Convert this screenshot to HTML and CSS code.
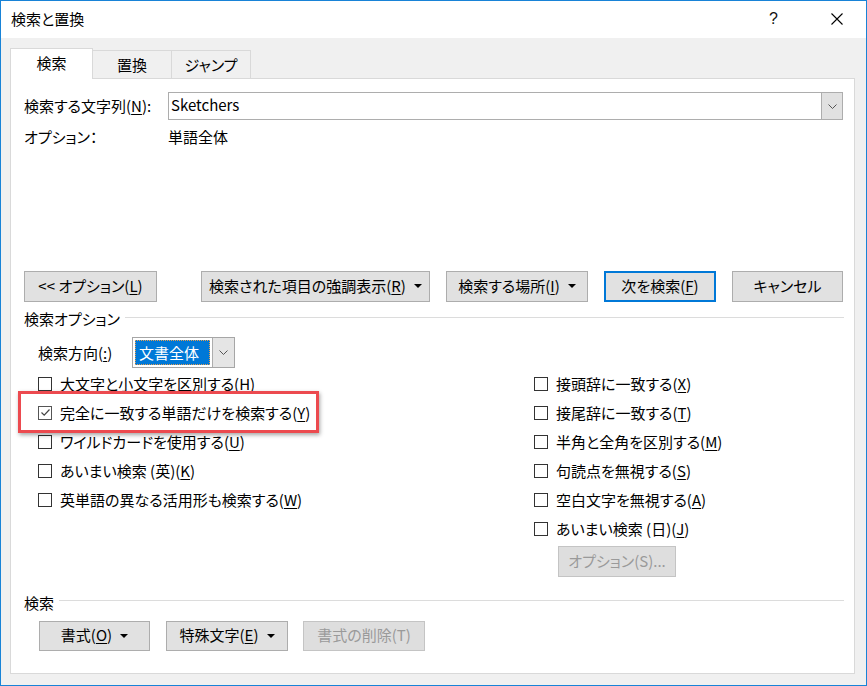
FILE: index.html
```html
<!DOCTYPE html>
<html lang="ja">
<head>
<meta charset="utf-8">
<title>検索と置換</title>
<link rel="stylesheet" href="styles.css">
</head>
<body>
<div class="window">
  <div class="titlebar">
    <span class="title">検索と置換</span>
    <span class="help">?</span>
    <span class="close"><svg width="12" height="12" viewBox="0 0 12 12"><path d="M0.5 0.5L11.5 11.5M11.5 0.5L0.5 11.5" stroke="#000" stroke-width="1.1" fill="none"/></svg></span>
  </div>
  <div class="client">
    <div class="tabs">
      <div class="tab tab-active">検索</div>
      <div class="tab">置換</div>
      <div class="tab">ジャンプ</div>
    </div>
    <div class="panel">
      <div class="find-row">
        <label class="find-label">検索する文字列(<u>N</u>):</label>
        <div class="combo">
          <span class="combo-text">Sketchers</span>
          <span class="combo-btn"><svg width="9" height="5" viewBox="0 0 9 5"><path d="M0.5 0.5L4.5 4.5L8.5 0.5" stroke="#555" fill="none"/></svg></span>
        </div>
      </div>
      <div class="opt-row">
        <span class="opt-label">オプション：</span>
        <span>単語全体</span>
      </div>

      <div class="btn-row">
        <button class="btn btn-less">&lt;&lt; オプション(<u>L</u>)</button>
        <div class="btn-group">
          <button class="btn btn-highlight">検索された項目の強調表示(<u>R</u>)<i class="tri"></i></button>
          <button class="btn btn-where">検索する場所(<u>I</u>)<i class="tri"></i></button>
          <button class="btn btn-next">次を検索(<u>F</u>)</button>
          <button class="btn btn-cancel">キャンセル</button>
        </div>
      </div>

      <div class="section">
        <span class="section-label">検索オプション</span>
        <span class="section-line"></span>
      </div>

      <div class="dir-row">
        <span class="dir-label">検索方向(<u>:</u>)</span>
        <div class="select">
          <span class="select-val"><span class="select-hl">文書全体</span></span>
          <span class="select-btn"><svg width="9" height="5" viewBox="0 0 9 5"><path d="M0.5 0.5L4.5 4.5L8.5 0.5" stroke="#555" fill="none"/></svg></span>
        </div>
      </div>

      <div class="opts">
        <div class="col col-left">
          <div class="chk"><span class="box"></span>大文字と小文字を区別する(<u>H</u>)</div>
          <div class="chk"><span class="box box-on"><svg width="11" height="11" viewBox="0 0 11 11"><path d="M1.5 5.5L4.2 8.2L9.5 2.5" stroke="#444" stroke-width="1.2" fill="none"/></svg></span>完全に一致する単語だけを検索する(<u>Y</u>)</div>
          <div class="chk"><span class="box"></span>ワイルドカードを使用する(<u>U</u>)</div>
          <div class="chk"><span class="box"></span>あいまい検索 (英)(<u>K</u>)</div>
          <div class="chk"><span class="box"></span>英単語の異なる活用形も検索する(<u>W</u>)</div>
        </div>
        <div class="col col-right">
          <div class="chk"><span class="box"></span>接頭辞に一致する(<u>X</u>)</div>
          <div class="chk"><span class="box"></span>接尾辞に一致する(<u>T</u>)</div>
          <div class="chk"><span class="box"></span>半角と全角を区別する(<u>M</u>)</div>
          <div class="chk"><span class="box"></span>句読点を無視する(<u>S</u>)</div>
          <div class="chk"><span class="box"></span>空白文字を無視する(<u>A</u>)</div>
          <div class="chk"><span class="box"></span>あいまい検索 (日)(<u>J</u>)</div>
          <button class="btn btn-disabled btn-fuzzy">オプション(S)...</button>
        </div>
      </div>

      <div class="section section-find">
        <span class="section-label">検索</span>
        <span class="section-line"></span>
      </div>

      <div class="bottom-row">
        <button class="btn btn-format">書式(<u>O</u>)<i class="tri"></i></button>
        <button class="btn btn-special">特殊文字(<u>E</u>)<i class="tri"></i></button>
        <button class="btn btn-disabled btn-clear">書式の削除(T)</button>
      </div>
    </div>
  </div>
  <div class="callout"></div>
</div>
</body>
</html>
```

FILE: styles.css
```css
* { box-sizing: border-box; }
html, body { margin: 0; padding: 0; background: #f0f0f0; }
body {
  font-family: "Noto Sans CJK JP", "Noto Sans", sans-serif;
  font-size: 15px;
  line-height: 18px;
  color: #000;
  font-feature-settings: "palt";
}
u { text-decoration: underline; text-underline-offset: 2px; text-decoration-thickness: 1px; }

.window {
  position: relative;
  width: 867px;
  height: 686px;
  border: 1px solid #1883d7;
  background: #f0f0f0;
  overflow: hidden;
}

.titlebar {
  height: 37px;
  background: #fff;
  display: flex;
  align-items: center;
  padding-left: 10px;
}
.title { font-size: 15px; flex: 1; padding-bottom: 2px; }
.help { width: 14px; font-size: 16px; margin-right: 48px; padding-bottom: 2px; font-family: "Liberation Sans", sans-serif; color: #111; }
.close { width: 12px; height: 12px; margin-right: 23px; display: flex; margin-top: -2px; }

.client {
  padding: 10px 0 0 9px;
}

.tabs {
  display: flex;
  align-items: flex-end;
  height: 30px;
}
.tab {
  width: 79px;
  height: 28px;
  border-top: 1px solid #d9d9d9;
  border-right: 1px solid #d9d9d9;
  background: #f0f0f0;
  display: flex;
  align-items: center;
  justify-content: center;
  padding-top: 1px;
}
.tab-active {
  width: 83px;
  height: 31px;
  margin-bottom: -1px;
  border-left: 1px solid #d9d9d9;
  background: #fff;
  position: relative;
  z-index: 1;
  padding-top: 0;
  padding-bottom: 2px;
}
.tab-active + .tab { border-left: none; }

.panel {
  width: 845px;
  height: 596px;
  background: #fff;
  border: 1px solid #d9d9d9;
  padding: 13px 11px 0 13px;
}

.find-row {
  display: flex;
  align-items: center;
  height: 28px;
}
.find-label { width: 144px; }
.combo {
  flex: 1;
  height: 28px;
  border: 1px solid #adadad;
  display: flex;
  align-items: stretch;
}
.combo-text { flex: 1; padding: 3px 0 0 2px; }
.combo-btn {
  width: 21px;
  background: #e1e1e1;
  border-left: 1px solid #adadad;
  display: flex;
  align-items: center;
  justify-content: center;
}

.opt-row {
  margin-top: 8px;
  display: flex;
  height: 18px;
}
.opt-label { width: 144px; }

.btn {
  font: inherit;
  font-feature-settings: "palt";
  color: #000;
  background: #e1e1e1;
  border: 1px solid #adadad;
  height: 31px;
  padding: 0 0 2px;
  display: flex;
  align-items: center;
  justify-content: center;
  margin: 0;
}
.tri {
  display: inline-block;
  width: 0; height: 0;
  border-left: 4px solid transparent;
  border-right: 4px solid transparent;
  border-top: 4px solid #000;
  margin-left: 8px;
  margin-top: 1px;
}
.btn-row {
  margin-top: 125px;
  display: flex;
  justify-content: space-between;
}
.btn-less { width: 133px; }
.btn-group { display: flex; gap: 16px; }
.btn-highlight { width: 229px; }
.btn-where { width: 142px; }
.btn-next { width: 112px; border: 2px solid #0078d7; }
.btn-cancel { width: 111px; }

.section {
  margin-top: 8px;
  display: flex;
  height: 18px;
  margin-right: -1px;
}
.section-line {
  flex: 1;
  height: 1px;
  background: #dcdcdc;
  margin: 7px 0 0 5px;
}

.dir-row {
  margin-top: 9px;
  height: 31px;
  display: flex;
  align-items: center;
  padding-left: 14px;
}
.dir-label { width: 94px; }
.select {
  width: 103px;
  height: 31px;
  border: 1px solid #a6a6a6;
  display: flex;
  background: #fff;
}
.select-val { flex: 1; padding: 2px; display: flex; }
.select-hl {
  flex: 1;
  background: #0078d7;
  color: #fff;
  border: 1px dotted #e8a050;
  padding-left: 3px;
  line-height: 23px;
}
.select-btn {
  width: 22px;
  background: #e5e5e5;
  border-left: 1px solid #adadad;
  display: flex;
  align-items: center;
  justify-content: center;
}

.opts {
  margin-top: 1px;
  display: grid;
  grid-template-columns: 496px 1fr;
  padding-left: 14px;
}
.chk {
  height: 29px;
  display: flex;
  align-items: center;
  white-space: nowrap;
}
.box {
  width: 14px;
  height: 14px;
  border: 1px solid #333;
  background: #fff;
  margin-right: 8px;
  display: flex;
  align-items: center;
  justify-content: center;
  flex: none;
}
.box-on { border-color: #555; }

.btn-disabled {
  background: #dedede;
  border-color: #c4c4c4;
  color: #9a9a9a;
}
.btn-fuzzy {
  width: 118px;
  margin: 3px 0 0 24px;
}

.section-find { margin-top: 17px; }
.section-find .section-line { margin-top: 6px; }

.bottom-row {
  margin-top: 9px;
  display: flex;
  padding-left: 15px;
  gap: 16px;
}
.bottom-row .btn { height: 30px; }
.btn-format { width: 111px; }
.btn-special { width: 122px; }
.btn-clear { width: 122px; margin-left: -1px; }

.callout {
  position: absolute;
  left: 17px;
  top: 390px;
  width: 301px;
  height: 42px;
  border: 3px solid #ec4a4f;
  box-shadow: 1px 2px 4px rgba(0, 0, 0, 0.35);
  pointer-events: none;
}
```
